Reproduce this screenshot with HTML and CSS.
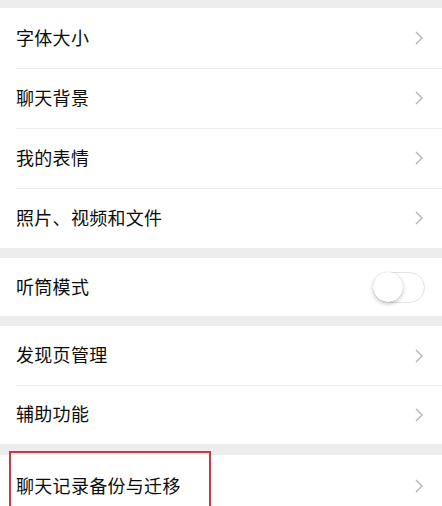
FILE: index.html
```html
<!DOCTYPE html>
<html lang="zh-CN">
<head>
<meta charset="utf-8">
<link rel="stylesheet" href="styles.css">
</head>
<body>
<div class="page">
  <div class="gap top"></div>
  <div class="group">
    <div class="row"><span class="label">字体大小</span><svg class="chev" viewBox="0 0 8 14"><path d="M1 1l6 6-6 6"/></svg></div>
    <div class="row"><span class="label">聊天背景</span><svg class="chev" viewBox="0 0 8 14"><path d="M1 1l6 6-6 6"/></svg></div>
    <div class="row"><span class="label">我的表情</span><svg class="chev" viewBox="0 0 8 14"><path d="M1 1l6 6-6 6"/></svg></div>
    <div class="row"><span class="label">照片、视频和文件</span><svg class="chev" viewBox="0 0 8 14"><path d="M1 1l6 6-6 6"/></svg></div>
  </div>
  <div class="gap"></div>
  <div class="group">
    <div class="row short"><span class="label">听筒模式</span><span class="toggle"><span class="knob"></span></span></div>
  </div>
  <div class="gap"></div>
  <div class="group">
    <div class="row mid"><span class="label">发现页管理</span><svg class="chev" viewBox="0 0 8 14"><path d="M1 1l6 6-6 6"/></svg></div>
    <div class="row mid"><span class="label">辅助功能</span><svg class="chev" viewBox="0 0 8 14"><path d="M1 1l6 6-6 6"/></svg></div>
  </div>
  <div class="gap last"></div>
  <div class="group">
    <div class="row highlight"><span class="label">聊天记录备份与迁移</span><svg class="chev" viewBox="0 0 8 14"><path d="M1 1l6 6-6 6"/></svg><span class="mark"></span></div>
  </div>
</div>
</body>
</html>
```
FILE: styles.css
```css
* { box-sizing: border-box; }
html, body { margin: 0; padding: 0; }
body {
  width: 442px;
  height: 506px;
  overflow: hidden;
  background: #ededed;
  font-family: "Noto Sans CJK SC", "Noto Sans", sans-serif;
  color: #0c0c0c;
}
.page { display: flex; flex-direction: column; }
.gap { height: 10px; background: #ededed; }
.gap.top { height: 8px; }
.gap.last { height: 11px; }
.group { background: #fff; }
.row {
  position: relative;
  height: 60px;
  display: flex;
  align-items: center;
  padding: 0 19px 0 16px;
}
.row.short { height: 58px; }
.row.mid { height: 59px; }
.row.highlight { height: 62px; }
.row + .row::before {
  content: "";
  position: absolute;
  top: 0;
  left: 16px;
  right: 0;
  height: 1px;
  background: #ececec;
}
.label {
  flex: 1;
  font-size: 18px;
  line-height: 24px;
  letter-spacing: 0.3px;
  padding-bottom: 3px;
}
.chev {
  width: 8px;
  height: 14px;
  fill: none;
  stroke: #b4b4b4;
  stroke-width: 1.4;
}
.toggle {
  position: relative;
  width: 52px;
  height: 31px;
  border: 1.5px solid #e2e2e2;
  border-radius: 16px;
  background: #fff;
  margin-right: -2px;
}
.knob {
  position: absolute;
  left: -1px;
  top: -1px;
  width: 30px;
  height: 30px;
  border-radius: 50%;
  background: #fff;
  box-shadow: 0 2px 4px rgba(0,0,0,0.22), 0 0 1px rgba(0,0,0,0.2);
}
.mark {
  position: absolute;
  left: 9px;
  top: -4px;
  width: 202px;
  height: 80px;
  border: 2px solid #d8333f;
}
```
